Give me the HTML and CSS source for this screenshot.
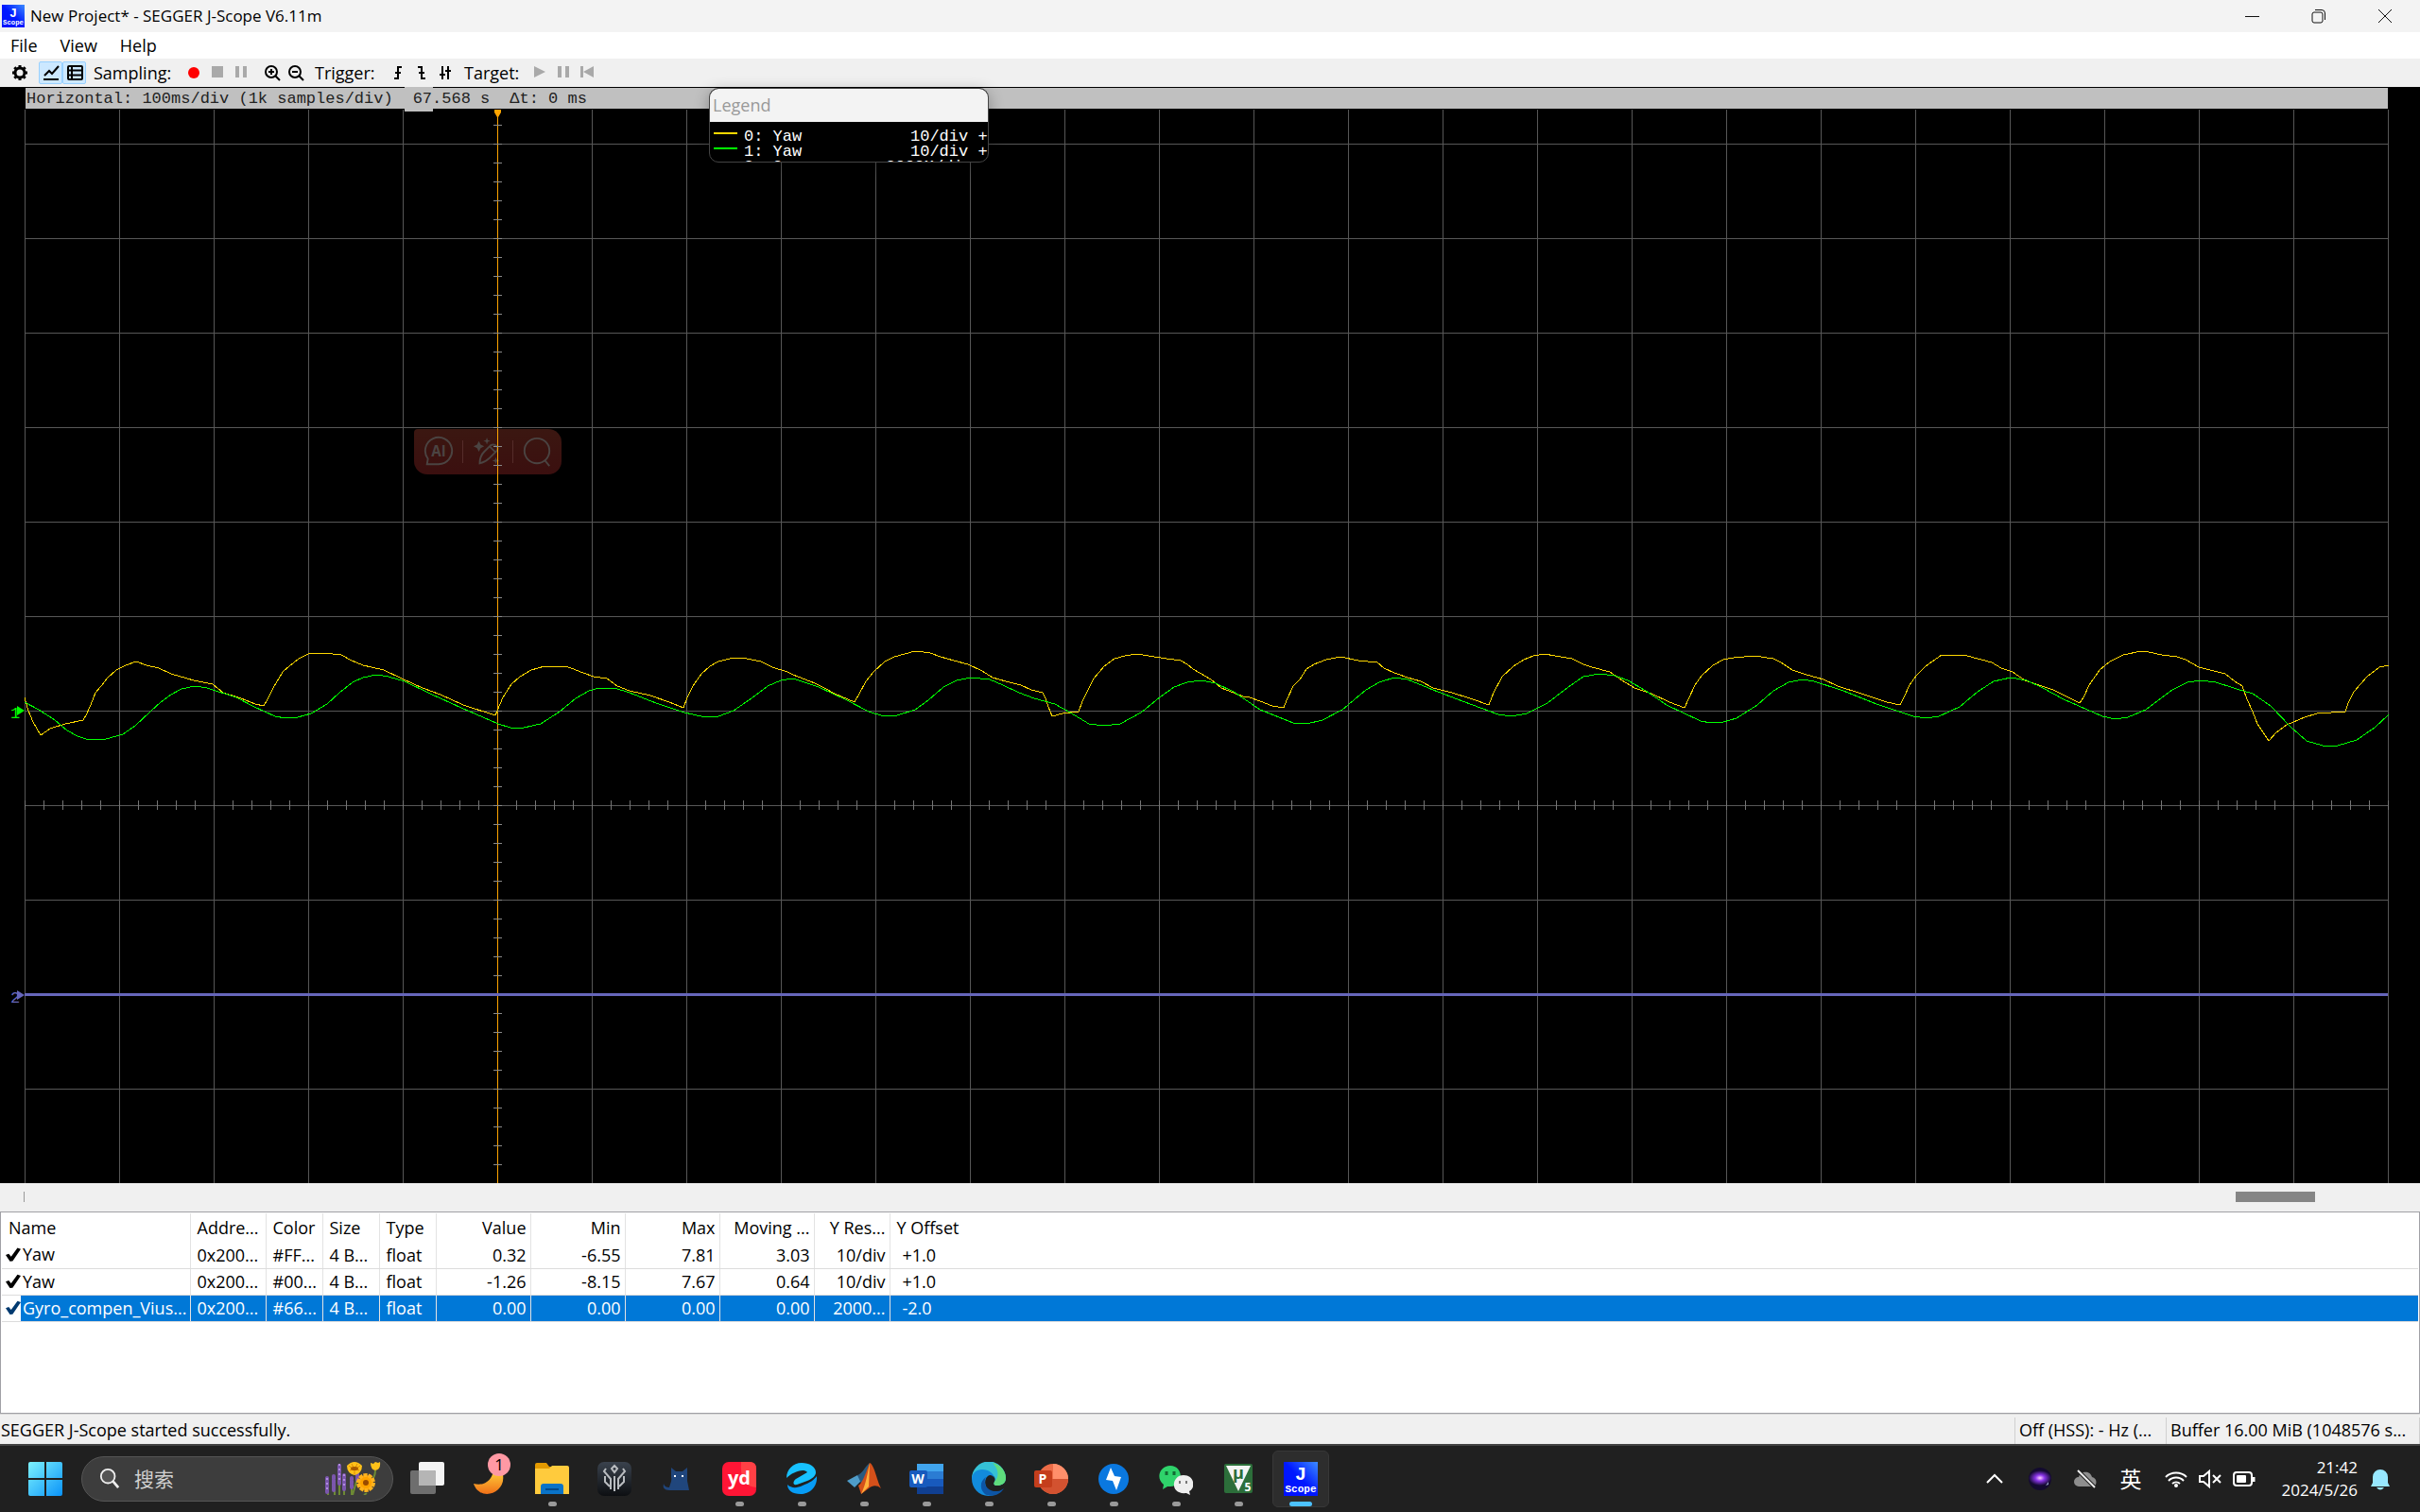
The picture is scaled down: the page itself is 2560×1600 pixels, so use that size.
FILE: index.html
```html
<!DOCTYPE html>
<html lang="zh">
<head>
<meta charset="UTF-8" />
<meta name="viewport" content="width=device-width, initial-scale=1" />
<title>New Project* - SEGGER J-Scope V6.11m</title>
<link rel="stylesheet" href="styles.css">
</head>
<body>
<header class="titlebar">
  <svg class="app-icon" viewBox="0 0 36 36">
    <defs>
      <linearGradient id="blue" x1="0" x2="1" y1="1" y2="0"><stop offset="0" stop-color="#0010ff" /><stop offset=".5" stop-color="#0018ff" /><stop offset="1" stop-color="#3c8cff" /></linearGradient>
    </defs>
    <rect width="36" height="36" fill="url(#blue)" />
    <text x="18" y="19" class="icon-j">J</text>
    <text x="18" y="32" class="icon-scope">Scope</text>
  </svg>
  <span class="title">New Project* - SEGGER J-Scope V6.11m</span>
  <div class="window-buttons">
    <button aria-label="Minimize"><svg viewBox="0 0 16 16"><path d="M0 8.500h15" /></svg></button>
    <button aria-label="Restore"><svg viewBox="0 0 16 16"><rect x="1" y="4" width="11" height="11" rx="2" /><path d="M4 1.500h7a3.500 3.500 0 0 1 3.500 3.500v7" /></svg></button>
    <button aria-label="Close"><svg viewBox="0 0 16 16"><path d="M1 1l14 14M15 1L1 15" /></svg></button>
  </div>
</header>

<nav class="menubar">
  <button>File</button>
  <button>View</button>
  <button>Help</button>
</nav>

<div class="toolbar">
  <button class="gear" aria-label="Settings"><svg viewBox="0 0 24 24"><circle cx="12" cy="12" r="5" fill="none" stroke="#000" stroke-width="3" /><path d="M12 4v3M12 17v3M4 12h3M17 12h3M6.300 6.300l2 2M15.700 15.700l2 2M17.700 6.300l-2 2M8.300 15.700l-2 2" stroke="#000" stroke-width="3" /></svg></button>
  <button class="on" aria-label="Graph view"><svg viewBox="0 0 24 24"><path d="M5 15l5-5 3 3 7-8M4 19h16" fill="none" stroke="#000" stroke-width="2" /></svg></button>
  <button class="on" aria-label="Table view"><svg viewBox="0 0 24 24"><rect x="5" y="5" width="15" height="14" rx="1" fill="none" stroke="#000" stroke-width="2" /><path d="M9 5v14M5 9.500h15M5 14.500h15" stroke="#000" stroke-width="2" /></svg></button>
  <span class="tool-label sampling">Sampling:</span>
  <button aria-label="Record"><svg viewBox="0 0 24 24"><circle cx="12" cy="12" r="6" fill="#f00" /></svg></button>
  <button aria-label="Stop"><svg viewBox="0 0 24 24"><path d="M6 5h12v12H6z" fill="#a9a9a9" /></svg></button>
  <button aria-label="Pause"><svg viewBox="0 0 24 24"><path d="M6 5h4v12H6zM14 5h4v12h-4z" fill="#a9a9a9" /></svg></button>
  <button class="zoom-in" aria-label="Zoom in"><svg viewBox="0 0 24 24"><circle cx="11" cy="11" r="6" fill="none" stroke="#000" stroke-width="2" /><path d="M8 11h6M11 8v6M15 15l5 5" stroke="#000" stroke-width="2" /></svg></button>
  <button aria-label="Zoom out"><svg viewBox="0 0 24 24"><circle cx="11" cy="11" r="6" fill="none" stroke="#000" stroke-width="2" /><path d="M8 11h6M15 15l5 5" stroke="#000" stroke-width="2" /></svg></button>
  <span class="tool-label trigger">Trigger:</span>
  <button aria-label="Rising edge"><svg viewBox="0 0 24 24"><path d="M8 18h4V6h4M9 12h6" fill="none" stroke="#000" stroke-width="2" /></svg></button>
  <button aria-label="Falling edge"><svg viewBox="0 0 24 24"><path d="M8 6h4v12h4M9 12h6" fill="none" stroke="#000" stroke-width="2" /></svg></button>
  <button aria-label="Both edges"><svg viewBox="0 0 24 24"><path d="M9 5v14M15 5v14M6 14h6M12 10h6" fill="none" stroke="#000" stroke-width="2" /></svg></button>
  <span class="tool-label target">Target:</span>
  <button aria-label="Run"><svg viewBox="0 0 24 24"><path d="M6 5l12 6-12 6z" fill="#a9a9a9" /></svg></button>
  <button aria-label="Halt"><svg viewBox="0 0 24 24"><path d="M6 5h4v12H6zM14 5h4v12h-4z" fill="#a9a9a9" /></svg></button>
  <button aria-label="Reset"><svg viewBox="0 0 24 24"><path d="M5 5h3v12H5zM19 5v12l-11-6z" fill="#a9a9a9" /></svg></button>
</div>

<main class="scope">
  <div class="readout">
    <span>Horizontal: 100ms/div (1k samples/div)</span>
    <span class="cursor-time">67.568 s</span>
    <span>Δt: 0 ms</span>
  </div>

  <svg class="plot" viewBox="0 0 2560 1136" preserveAspectRatio="none">
    <defs>
      <pattern id="grid" x="26" y="36" width="100" height="100" patternUnits="userSpaceOnUse">
        <path d="M0 .5H100M.5 0V100" stroke="#575757" />
      </pattern>
      <pattern id="ticksX" x="26" y="731" width="20" height="10" patternUnits="userSpaceOnUse">
        <path d="M.5 0V10" stroke="#757575" />
      </pattern>
      <pattern id="ticksY" x="522" y="16" width="9" height="20" patternUnits="userSpaceOnUse">
        <path d="M0 .5H9" stroke="#8a8a8a" />
      </pattern>
    </defs>
    <rect x="26" y="0" width="2501" height="1136" fill="url(#grid)" />
    <rect x="26" y="731" width="2501" height="10" fill="url(#ticksX)" />
    <path class="trace" stroke="#ffa500" d="M526.500 0V1136" />
    <rect x="522" y="16" width="9" height="1120" fill="url(#ticksY)" />
    <path d="M523 0h7v3l-3 5h-1l-3-5z" fill="#ffa500" />

    <polyline class="trace" stroke="#ffd800" points="26,622 30,636 35,648 43,662 53,655 69,650 88,646 91,641 96,630 101,617 107,610 114,601 123,593 133,588 144,584 155,588 168,591 181,597 205,604 225,608 236,617 255,623 270,629 279,631 283,624 289,612 299,595 306,589 316,581 326,576 335,575 343,575 361,577 372,583 384,588 406,593 427,603 447,612 466,619 490,630 524,641 526,636 532,622 541,608 550,600 562,593 576,589 598,589 607,592 614,595 628,600 642,602 653,610 666,615 688,620 708,627 723,633 727,622 733,610 742,597 751,589 760,584 772,581 782,580 790,581 805,584 817,590 833,595 839,598 862,607 872,612 883,618 904,627 909,618 916,605 924,595 936,584 946,579 957,576 968,573 977,574 984,575 995,579 1009,583 1024,587 1039,594 1050,601 1064,605 1080,609 1091,614 1103,617 1106,623 1109,632 1113,642 1124,639 1132,638 1141,637 1145,626 1151,614 1157,602 1168,589 1179,581 1190,578 1202,576 1215,578 1234,581 1249,583 1256,587 1262,592 1281,603 1292,612 1315,621 1322,622 1333,626 1346,631 1358,633 1361,625 1368,610 1375,603 1382,592 1390,587 1403,582 1418,579 1437,583 1457,585 1464,591 1475,596 1489,601 1503,605 1516,612 1536,617 1558,624 1575,630 1580,617 1589,600 1601,589 1612,582 1622,578 1634,576 1645,578 1663,581 1675,587 1684,590 1703,595 1716,604 1729,612 1747,618 1766,627 1782,633 1786,624 1793,609 1800,599 1812,588 1823,582 1834,580 1856,578 1876,581 1884,585 1896,593 1911,598 1929,603 1944,610 1969,618 1996,627 2010,630 2014,622 2020,609 2027,599 2037,589 2054,577 2065,577 2081,578 2107,585 2117,591 2129,595 2142,604 2172,614 2200,628 2204,622 2210,609 2221,593 2232,584 2246,577 2265,573 2273,574 2287,577 2303,579 2312,582 2326,590 2354,597 2364,605 2372,610 2377,624 2383,637 2388,650 2400,668 2408,659 2419,651 2438,643 2451,639 2481,637 2484,628 2490,616 2504,600 2517,590 2527,588" />
    <polyline class="trace" stroke="#00ff00" points="26,627 41,635 58,646 71,657 82,663 91,666 101,667 112,666 130,661 143,652 159,637 170,627 181,619 192,613 206,610 219,612 250,622 269,632 291,642 302,644 315,643 329,639 346,629 359,617 373,606 384,601 398,598 411,600 428,605 455,618 488,633 527,650 540,654 554,654 572,650 592,637 609,623 623,615 634,612 650,612 666,617 694,628 724,638 746,643 760,642 776,636 795,623 812,610 826,604 839,602 866,611 894,624 919,637 935,642 949,641 968,635 982,625 998,611 1012,604 1027,601 1047,603 1061,609 1078,617 1094,623 1116,629 1132,638 1152,650 1168,652 1185,650 1207,638 1228,621 1242,611 1256,606 1271,604 1286,607 1305,616 1333,635 1368,649 1382,650 1399,646 1420,635 1445,614 1459,606 1475,601 1489,603 1516,614 1547,626 1585,640 1599,642 1615,639 1637,628 1659,611 1675,600 1692,597 1708,599 1722,604 1741,615 1763,630 1799,647 1810,649 1823,648 1837,644 1859,630 1876,615 1892,606 1907,603 1919,605 1950,615 1985,629 2024,642 2037,644 2051,642 2073,632 2092,616 2109,605 2127,601 2144,604 2161,612 2183,624 2224,642 2238,645 2251,643 2270,635 2298,614 2314,606 2328,604 2344,606 2366,613 2383,618 2402,631 2424,654 2440,668 2457,673 2473,673 2493,667 2512,654 2527,640" />
    <path d="M26 936.500H2526" stroke="#6666bb" stroke-width="3" />

    <text x="11" y="644" fill="#00ff00">1</text>
    <path d="M18 631v10l8-5z" fill="#00ff00" />
    <text x="11" y="945" fill="#6666bb">2</text>
    <path d="M18 932v10l8-5z" fill="#6666bb" />
  </svg>

  <div class="quick-bar">
    <button aria-label="AI"><svg viewBox="0 0 36 36"><path d="M5 32l1-6a15 15 0 1 1 12 6z" /><text x="18" y="23">AI</text></svg></button>
    <button aria-label="Edit"><svg viewBox="0 0 36 36"><path d="M9 31c0-6 1-9 5-13l7-7c5-3 10 2 7 6l-8 8c-4 4-6 5-11 6zM20 12l7 7" /><path class="solid" d="M8 6l2 4 4 2-4 2-2 4-2-4-4-2 4-2zM17 2l1 3 3 1-3 1-1 3-1-3-3-1 3-1zM27 24l1 3 3 1-3 1-1 3-1-3-3-1 3-1z" /></svg></button>
    <button aria-label="Search"><svg viewBox="0 0 36 36"><circle cx="18" cy="17" r="14" /><path d="M27 28l5 6" /></svg></button>
  </div>

  <section class="legend">
    <h2>Legend</h2>
    <ul>
      <li><i class="swatch yellow"></i><span>0: Yaw</span><b>10/div +</b></li>
      <li><i class="swatch green"></i><span>1: Yaw</span><b>10/div +</b></li>
      <li><i class="swatch"></i><span>2: Gyro</span><b class="wide">2000M/div</b></li>
    </ul>
  </section>
</main>

<div class="scrollbar"><span class="thumb"></span></div>

<section class="watch">
  <table>
    <colgroup>
      <col class="c-name"><col class="c-80"><col class="c-60"><col class="c-60"><col class="c-60">
      <col class="c-100"><col class="c-100"><col class="c-100"><col class="c-100"><col class="c-80"><col>
    </colgroup>
    <thead>
      <tr><th>Name</th><th>Addre...</th><th>Color</th><th>Size</th><th>Type</th><th class="num">Value</th><th class="num">Min</th><th class="num">Max</th><th class="num">Moving ...</th><th class="num">Y Res...</th><th>Y Offset</th></tr>
    </thead>
    <tbody>
      <tr><td class="name"><label><input type="checkbox" checked><span>Yaw</span></label></td><td>0x200...</td><td>#FF...</td><td>4 B...</td><td>float</td><td class="num">0.32</td><td class="num">-6.55</td><td class="num">7.81</td><td class="num">3.03</td><td class="num">10/div</td><td class="offset">+1.0</td></tr>
      <tr><td class="name"><label><input type="checkbox" checked><span>Yaw</span></label></td><td>0x200...</td><td>#00...</td><td>4 B...</td><td>float</td><td class="num">-1.26</td><td class="num">-8.15</td><td class="num">7.67</td><td class="num">0.64</td><td class="num">10/div</td><td class="offset">+1.0</td></tr>
      <tr class="selected"><td class="name"><label><input type="checkbox" checked><span>Gyro_compen_Vius...</span></label></td><td>0x200...</td><td>#66...</td><td>4 B...</td><td>float</td><td class="num">0.00</td><td class="num">0.00</td><td class="num">0.00</td><td class="num">0.00</td><td class="num">2000...</td><td class="offset">-2.0</td></tr>
    </tbody>
  </table>
</section>

<div class="statusbar">
  <span class="message">SEGGER J-Scope started successfully.</span>
  <span class="rate">Off (HSS): - Hz (...</span>
  <span class="buffer">Buffer 16.00 MiB (1048576 s...</span>
</div>

<footer class="taskbar">
  <button class="start" aria-label="Start">
    <svg viewBox="0 0 36 36"><defs><linearGradient id="win" x1="0" y1="0" x2="1" y2="1"><stop offset="0" stop-color="#7df3ff" /><stop offset="1" stop-color="#0a93f8" /></linearGradient></defs><path d="M2 0h15v17H0V2q0-2 2-2zM19 0h15q2 0 2 2v15H19zM0 19h17v17H2q-2 0-2-2zM19 19h17v15q0 2-2 2H19z" fill="url(#win)" /></svg>
  </button>
  <label class="search">
    <svg class="lens" viewBox="0 0 24 24"><circle cx="10" cy="10" r="8" fill="#777" fill-opacity=".4" stroke="#eee" stroke-width="2" /><path d="M16 16l6 7" stroke="#eee" stroke-width="3" /></svg>
    <input type="text" placeholder="搜索" aria-label="搜索">
    <svg class="flowers" viewBox="0 0 60 36">
      <path d="M4 36V24M11 36V22M16 12v24M21 36V20M29 36V22M35 18l-5 18M45 34l-3 2M54 10q0 8-6 12" stroke="#6d8a34" stroke-width="2" fill="none" />
      <path d="M3 33V18M10 31V16M16 24V4M21 30V14M29 28V18M35 20V12" stroke="#7b56ad" stroke-width="4" stroke-dasharray="3 1" stroke-linecap="round" />
      <path d="M3 30V15M16 20V2M21 26V12" stroke="#b18be0" stroke-width="2" stroke-dasharray="2 3" />
      <path d="M24 5q8-8 16 0 0 8-8 10-8-2-8-10zM49 2l3 1 2-2 3 1 2-1q1 8-5 9-5-1-5-8z" fill="#ffc21a" />
      <path d="M26 5l4 3M38 5l-4 3M29 3l2 4M35 3l-2 4M32 14v-4M27 10l3-1M37 10l-3-1" stroke="#e08c00" />
      <ellipse cx="32" cy="8" rx="4" ry="2" fill="#a85b00" />
      <circle cx="44" cy="23" r="8" fill="#ffa300" /><circle cx="44" cy="23" r="8" fill="none" stroke="#ffb31f" stroke-width="4" stroke-dasharray="4 1" /><circle cx="44" cy="23" r="3" fill="#9a4a00" />
    </svg>
  </label>

  <div class="apps">
    <button aria-label="Task view"><svg viewBox="0 0 36 36"><rect x="9" y="0" width="27" height="25" rx="2" fill="#f4f4f4" /><rect x="0" y="9" width="27" height="25" rx="2" fill="#6e6e6e" /><path d="M9 9h16q2 0 2 2v14H9z" fill="#b5b5b5" /></svg></button>
    <button aria-label="Notifications"><svg viewBox="0 0 36 36"><defs><linearGradient id="moon" x1="0" y1="0" x2="0" y2="1"><stop offset="0" stop-color="#ffcf3a" /><stop offset="1" stop-color="#f07018" /></linearGradient></defs><path d="M31 10c8 22-23 34-30 13 12 3 19-4 21-13z" fill="url(#moon)" /></svg><span class="badge">1</span></button>
    <button class="open" aria-label="File Explorer"><svg viewBox="0 0 36 36"><path d="M0 3q0-2 2-2h10l3 4h10v10H0z" fill="#e39a00" /><path d="M0 7h15l3-3h16q2 0 2 2v28H0z" fill="#ffcb3d" /><path d="M6 34V26q0-3 3-3h18q3 0 3 3v8z" fill="#0a73c8" /><path d="M11 29h14" stroke="#034a8c" stroke-width="2" /></svg></button>
    <button aria-label="Game"><svg viewBox="0 0 36 36"><defs><linearGradient id="game" x1="0" y1="0" x2="0" y2="1"><stop offset="0" stop-color="#3a424d" /><stop offset="1" stop-color="#0d0f12" /></linearGradient></defs><rect width="36" height="36" rx="7" fill="url(#game)" /><path d="M9 7l-2 3 7 8v11M27 7l2 3-7 8v11M18 4l-3 3 3 4 3-4zM8 15v6l5 5M28 15v6l-5 5M18 15v16" fill="none" stroke="#b9bcc0" stroke-width="2" /></svg></button>
    <button aria-label="Clash"><svg viewBox="0 0 36 36"><path d="M12 6l5 4h7l5-4v14l2 10H10q-8 0-6-7 1 4 6 4c1-4 3-7 2-11z" fill="#20467c" /><path d="M16 14v2M24 14v2" stroke="#fff" stroke-width="2" /></svg></button>
    <button class="open" aria-label="Youdao"><svg viewBox="0 0 36 36"><rect width="36" height="36" rx="7" fill="#ff1535" /><path d="M20 0h9q7 0 7 7v20Q18 26 20 0z" fill="#ff4045" /><text x="18" y="24" class="icon-yd">yd</text></svg></button>
    <button class="open" aria-label="Browser"><svg viewBox="0 0 36 36"><path d="M2 17C2 8 9 1 18 1c8 0 15 4 15 10 0 4-4 7-9 9l-11 4c-5 1-4-4-1-6l12-7c-4-5-16 0-22 6z" fill="#17c1ff" /><path d="M34 15c1 12-8 19-17 19C8 34 3 30 3 24c4 4 10 4 16 1 8-3 12-6 15-10z" fill="#079cf5" /></svg></button>
    <button class="open" aria-label="MATLAB"><svg viewBox="0 0 36 36"><path d="M0 20l11-6 5 5-8 8z" fill="#4f9cc8" /><path d="M11 14c5-1 8-9 13-13L16 25z" fill="#285a80" /><path d="M24 1c5 2 7 17 12 27-5-4-9-3-13 0l-8 6-3-9c5-3 9-17 12-24z" fill="#d4501a" /><path d="M24 1l-1 25-8 8c5-10 7-23 9-33z" fill="#ffb13b" /></svg></button>
    <button class="open" aria-label="Word"><svg viewBox="0 0 36 36"><path d="M8 2h28v9H8z" fill="#41a5ee" /><path d="M8 10h28v9H8z" fill="#2b7cd3" /><path d="M8 18h28v8H8z" fill="#185abd" /><path d="M8 26h28v8H8z" fill="#103f91" /><rect y="9" width="19" height="18" rx="2" fill="#185abd" /><text x="9" y="23" class="icon-letter">W</text></svg></button>
    <button class="open" aria-label="Edge"><svg viewBox="0 0 36 36"><path d="M0 18a18 18 0 0 1 36-1c0 6-5 8-9 8s-4-2-3-4c2-4-1-8-6-8C10 13 6 16 0 18z" fill="#35c1d6" /><path d="M22 1c8 2 14 8 14 16 0 6-5 8-9 8s-4-2-3-4c5-5 5-13-2-20z" fill="#5fdc7c" /><path d="M0 18c0-6 5-10 11-10 7 0 12 4 13 9-2-3-5-4-7-2-6 5-2 17 7 20C10 39 0 29 0 18z" fill="#128bdc" /><path d="M15 16c-4 7 2 16 12 15 3 0 5-2 7-3-4 7-12 9-18 7-7-3-9-14-1-19z" fill="#0d55a5" /></svg></button>
    <button class="open" aria-label="PowerPoint"><svg viewBox="0 0 36 36"><circle cx="20" cy="18" r="16" fill="#ed6c47" /><path d="M20 2a16 16 0 0 1 16 16H20z" fill="#ff8f6b" /><path d="M4 18a16 16 0 0 0 32 0z" fill="#d35230" /><rect y="9" width="19" height="18" rx="2" fill="#c43e1c" /><text x="9" y="23" class="icon-letter">P</text></svg></button>
    <button class="open" aria-label="Thunder"><svg viewBox="0 0 36 36"><circle cx="18" cy="18" r="16" fill="#0a78e0" /><path d="M15 6l-5 13 7 1 4 10 5-14-7-1z" fill="#fff" /></svg></button>
    <button class="open" aria-label="WeChat"><svg viewBox="0 0 36 36"><path d="M12 4c14 0 15 22 0 22l-3 0-5 3 1-5C-4 17 1 4 12 4z" fill="#2fd36b" /><path d="M26 14c12 0 13 14 6 17l1 4-4-2c-18 2-16-19-3-19z" fill="#eee" /><path d="M8 10v4M16 10v4" stroke="#126b33" stroke-width="3" /><path d="M22 20v3M29 20v3" stroke="#777" stroke-width="2" /></svg></button>
    <button class="open" aria-label="Keil uVision"><svg viewBox="0 0 36 36"><rect x="3" y="2" width="30" height="31" rx="2" fill="#2c6e3a" /><path d="M5 4h26L18 31z" fill="#f4f4f4" /><text x="18" y="18" class="icon-mu">µ</text><text x="28" y="31" class="icon-five">5</text></svg></button>
    <button class="open active" aria-label="J-Scope"><svg viewBox="0 0 36 36"><rect width="36" height="36" fill="url(#blue)" /><text x="18" y="19" class="icon-j">J</text><text x="18" y="32" class="icon-scope">Scope</text></svg></button>
  </div>

  <div class="tray">
    <button aria-label="Show hidden icons"><svg viewBox="0 0 24 24"><path d="M4 16l8-8 8 8" fill="none" stroke="#fff" stroke-width="2" /></svg></button>
    <button aria-label="Orb"><svg viewBox="0 0 24 24"><defs><radialGradient id="orb"><stop offset="0" stop-color="#ffd0ff" /><stop offset=".4" stop-color="#8a35e8" /><stop offset="1" stop-color="#130a30" /></radialGradient></defs><circle cx="12" cy="12" r="12" fill="#130a30" /><ellipse cx="12" cy="11" rx="12" ry="8" fill="url(#orb)" /><path d="M18 19l3-4v3z" fill="#8c9ac0" /></svg></button>
    <button aria-label="OneDrive"><svg viewBox="0 0 24 24"><path d="M5 20a5 5 0 0 1 0-10c1-6 12-8 14 0 6 1 6 10 0 10z" fill="#8d8d8d" /><path d="M4 3l18 18" stroke="#222" stroke-width="4" /><path d="M4 3l18 18" stroke="#eee" stroke-width="2" /></svg></button>
    <button class="ime">英</button>
    <button class="quick" aria-label="Network, volume and battery">
      <svg viewBox="0 0 24 24"><path d="M1 10a16 16 0 0 1 22 0M4 14a11 11 0 0 1 16 0M8 17a6 6 0 0 1 8 0" fill="none" stroke="#fff" stroke-width="2" /><circle cx="12" cy="19" r="2" fill="#fff" /></svg>
      <svg viewBox="0 0 24 24"><path d="M1 9h4l6-5v16l-6-5H1zM15 8l8 8M23 8l-8 8" fill="none" stroke="#fff" stroke-width="2" /></svg>
      <svg viewBox="0 0 24 24"><rect x="1" y="5" width="19" height="14" rx="3" fill="none" stroke="#fff" stroke-width="2" /><rect x="4" y="8" width="10" height="8" rx="1" fill="#fff" /><path d="M22 10v5" stroke="#fff" stroke-width="3" /></svg>
    </button>
    <button class="clock"><time>21:42</time><time>2024/5/26</time></button>
    <button class="bell" aria-label="Notification centre"><svg viewBox="0 0 24 24"><path d="M4 16V10a8 8 0 0 1 16 0v6l2 4H2z" fill="#98e8ff" /><path d="M8 21h8q-4 5-8 0z" fill="#98e8ff" /></svg></button>
  </div>
</footer>
</body>
</html>
```
FILE: styles.css
```css
* {
  box-sizing: border-box;
}
body {
  margin: 0;
  height: 100vh;
  display: flex;
  flex-direction: column;
  overflow: hidden;
  background: #f0f0f0;
  color: #000;
  font-family: "Open Sans", "Noto Sans CJK SC", sans-serif;
  font-size: 18px;
  line-height: 24px;
}
button {
  padding: 0;
  border: 0;
  background: none;
  color: inherit;
  font: inherit;
}
svg {
  display: block;
}

/* title bar */
.titlebar {
  display: flex;
  align-items: center;
  flex: 0 0 34px;
  padding: 0 2px;
  background: #f3f3f3;
  font-size: 17px;
}
.app-icon {
  width: 24px;
  height: 24px;
  margin-right: 6px;
}
.window-buttons {
  display: flex;
  margin-left: auto;
}
.window-buttons button {
  display: flex;
  align-items: center;
  justify-content: center;
  width: 70px;
  height: 34px;
}
.window-buttons svg {
  width: 16px;
  height: 16px;
  fill: none;
  stroke: #111;
}
.icon-j, .icon-scope, .icon-yd, .icon-letter, .icon-mu, .icon-five {
  fill: #fff;
  font-weight: 700;
  text-anchor: middle;
}
.icon-j { font: 700 20px "Liberation Mono", monospace; }
.icon-scope { font: 700 11px "Liberation Mono", monospace; }
.icon-yd { font-size: 20px; }
.icon-letter { font-size: 14px; }
.icon-mu { fill: #2c6e3a; font-size: 18px; }
.icon-five { font-size: 12px; }

/* menu and toolbar */
.menubar {
  display: flex;
  flex: 0 0 28px;
  gap: 24px;
  padding-left: 11px;
  background: #fff;
}
.toolbar {
  display: flex;
  align-items: center;
  flex: 0 0 30px;
  padding-left: 8px;
  background: #f0f0f0;
}
.toolbar button {
  display: flex;
  align-items: center;
  justify-content: center;
  width: 25px;
  height: 24px;
}
.toolbar svg {
  width: 24px;
  height: 24px;
  flex: none;
}
.toolbar .gear {
  margin-right: 8px;
}
.toolbar .on {
  background: #cce8ff;
  border: 1px solid #99d1ff;
  border-radius: 2px;
}
.toolbar .zoom-in {
  margin-left: 8px;
}
.tool-label {
  margin-left: 8px;
}
.sampling { width: 93px; }
.trigger { width: 75px; }
.target { width: 67px; }

/* scope */
.scope {
  position: relative;
  display: flex;
  flex-direction: column;
  flex: 1;
  min-height: 0;
  padding-top: 1px;
  background: #000;
  font-family: "Liberation Mono", "Noto Sans CJK SC", monospace;
  font-size: 17px;
}
.readout {
  display: flex;
  gap: 21px;
  flex: none;
  height: 22px;
  margin: 0 34px 1px 27px;
  padding-left: 1px;
  background: #c0c0c0;
  color: #222;
  line-height: 24px;
  white-space: nowrap;
}
.cursor-time {
  position: relative;
  z-index: 2;
}
.cursor-time::before {
  content: "";
  position: absolute;
  z-index: -1;
  left: -9px;
  top: -1px;
  width: 30px;
  height: 26px;
  background: #c0c0c0;
}
.plot {
  position: relative;
  z-index: 1;
  flex: 1;
  width: 100%;
  min-height: 0;
}
.trace {
  fill: none;
  stroke-width: 1;
  vector-effect: non-scaling-stroke;
  shape-rendering: crispEdges;
}
.quick-bar {
  position: absolute;
  left: 438px;
  top: 362px;
  display: flex;
  align-items: center;
  width: 156px;
  height: 48px;
  border-radius: 4px 14px 14px 14px;
  background: linear-gradient(#3b1711, #3b0f0f);
}
.quick-bar button {
  flex: 1;
  height: 24px;
  display: flex;
  align-items: center;
  justify-content: center;
}
.quick-bar button + button {
  border-left: 1px solid #552c2a;
}
.quick-bar svg {
  width: 34px;
  height: 34px;
  flex: none;
  fill: none;
  stroke: #4b4442;
  stroke-width: 2;
}
.quick-bar .solid {
  fill: #4b4442;
  stroke: none;
}
.quick-bar text {
  fill: #4b4442;
  stroke: none;
  font: 700 16px "Open Sans", sans-serif;
  text-anchor: middle;
}
.legend {
  position: absolute;
  z-index: 3;
  left: 750px;
  top: 1px;
  width: 296px;
  height: 79px;
  overflow: hidden;
  border: 1px solid #444;
  border-radius: 10px;
  background: #000;
  color: #fff;
  box-shadow: 0 4px 16px rgba(0, 0, 0, 0.3);
}
.legend h2 {
  margin: 0;
  padding-left: 3px;
  height: 35px;
  background: #f3f3f3;
  color: #999;
  font: 400 18px/34px "Open Sans", sans-serif;
}
.legend ul {
  margin: 0;
  padding: 5px 0 0 4px;
  list-style: none;
}
.legend li {
  display: flex;
  height: 16px;
  line-height: 21px;
  white-space: nowrap;
}
.legend span {
  flex: 1;
}
.legend b {
  flex: 0 0 82px;
  font-weight: 400;
}
.legend .wide {
  flex-basis: 108px;
}
.swatch {
  width: 25px;
  height: 2px;
  margin: 6px 7px 0 0;
}
.yellow { background: #ffd800; }
.green { background: #0f0; }

/* overview scrollbar */
.scrollbar {
  display: flex;
  flex: 0 0 30px;
  margin-left: 25px;
  align-items: center;
  justify-content: flex-end;
  padding: 0 111px 2px 0;
}
.scrollbar::before {
  content: "";
  width: 1px;
  height: 11px;
  margin-right: auto;
  background: #999;
}
.thumb {
  width: 84px;
  height: 11px;
  background: #858585;
}

/* watch list */
.watch {
  flex: 0 0 214px;
  padding: 1px 1px 0;
  border: 1px solid #a0a0a5;
  background: #fff;
}
table {
  width: 100%;
  table-layout: fixed;
  border-collapse: collapse;
}
.c-name { width: 199px; }
.c-60 { width: 60px; }
.c-80 { width: 80px; }
.c-100 { width: 100px; }
th, td {
  height: 28px;
  padding: 0 4px 0 7px;
  border-right: 1px solid #e3e3e3;
  border-bottom: 1px solid #dcdcdc;
  font-weight: 400;
  text-align: left;
  white-space: nowrap;
  overflow: hidden;
}
th {
  height: 30px;
  border-bottom: 0;
}
th:last-child, td:last-child {
  border-right: 0;
}
.num {
  text-align: right;
}
td.offset {
  padding-left: 13px;
}
td.name {
  padding: 0 0 0 4px;
}
td label {
  display: flex;
  align-items: center;
}
input[type=checkbox] {
  appearance: none;
  width: 16px;
  height: 16px;
  margin: 0 2px 0 0;
  background: #000;
  clip-path: polygon(0 52%, 20% 44%, 36% 62%, 78% 4%, 100% 12%, 46% 92%, 28% 94%);
}
td label span {
  flex: 1;
  line-height: 27px;
}
.selected td {
  background: #0078d7;
  color: #fff;
}
.selected .name {
  background: linear-gradient(90deg, #fff 20px, #0078d7 20px);
}
.selected input {
  background: #003a70;
}

.statusbar {
  display: flex;
  flex: 0 0 32px;
  padding-top: 3px;
  border-top: 1px solid #d9d9d9;
  line-height: 26px;
  white-space: nowrap;
}
.message {
  flex: 1;
  padding-left: 1px;
}
.rate, .buffer {
  width: 160px;
  height: 28px;
  padding-left: 4px;
  border-left: 1px solid #d0d0d0;
}
.buffer {
  width: 269px;
  border-right: 1px solid #d0d0d0;
}

/* taskbar */
.taskbar {
  display: flex;
  align-items: center;
  flex: 0 0 72px;
  border-top: 2px solid #434343;
  background: #202020;
  color: #fff;
}
.taskbar svg {
  width: 36px;
  height: 36px;
}
.start {
  margin: 0 20px 0 30px;
}
.search {
  display: flex;
  align-items: center;
  width: 330px;
  height: 48px;
  padding: 0 12px 2px 18px;
  border: 1px solid #555;
  border-radius: 24px;
  background: #3d3d3d;
}
.search .lens {
  width: 22px;
  height: 22px;
}
.search input {
  flex: 1;
  min-width: 0;
  margin-left: 15px;
  padding: 0;
  border: 0;
  background: none;
  font: 21px "Noto Sans CJK SC", sans-serif;
}
.search input::placeholder {
  color: #d0d0d0;
}
.search .flowers {
  width: 60px;
}
.apps {
  display: flex;
  gap: 6px;
  margin-left: 6px;
}
.apps button {
  position: relative;
  display: flex;
  align-items: center;
  justify-content: center;
  width: 60px;
  height: 60px;
  border-radius: 6px;
}
.open::after {
  content: "";
  position: absolute;
  left: 26px;
  bottom: 1px;
  width: 9px;
  height: 5px;
  border-radius: 3px;
  background: #9a9a9a;
}
.apps .active {
  background: #2d2d2d;
  border: 1px solid #383838;
}
.active::after {
  left: 17px;
  bottom: 0;
  width: 24px;
  background: #4cc2ff;
}
.badge {
  position: absolute;
  right: 8px;
  top: 3px;
  width: 24px;
  height: 24px;
  border-radius: 50%;
  background: #ff99a4;
  color: #000;
  font-size: 17px;
  text-align: center;
}
.tray {
  display: flex;
  align-items: center;
  gap: 24px;
  margin-left: auto;
  margin-right: 30px;
}
.tray svg {
  width: 24px;
  height: 24px;
}
.ime {
  width: 24px;
  font-size: 23px;
}
.quick {
  display: flex;
  gap: 12px;
}
.clock {
  width: 84px;
  font-size: 17px;
  text-align: right;
}
.clock time {
  display: block;
}
.bell {
  margin-left: -12px;
}
```
